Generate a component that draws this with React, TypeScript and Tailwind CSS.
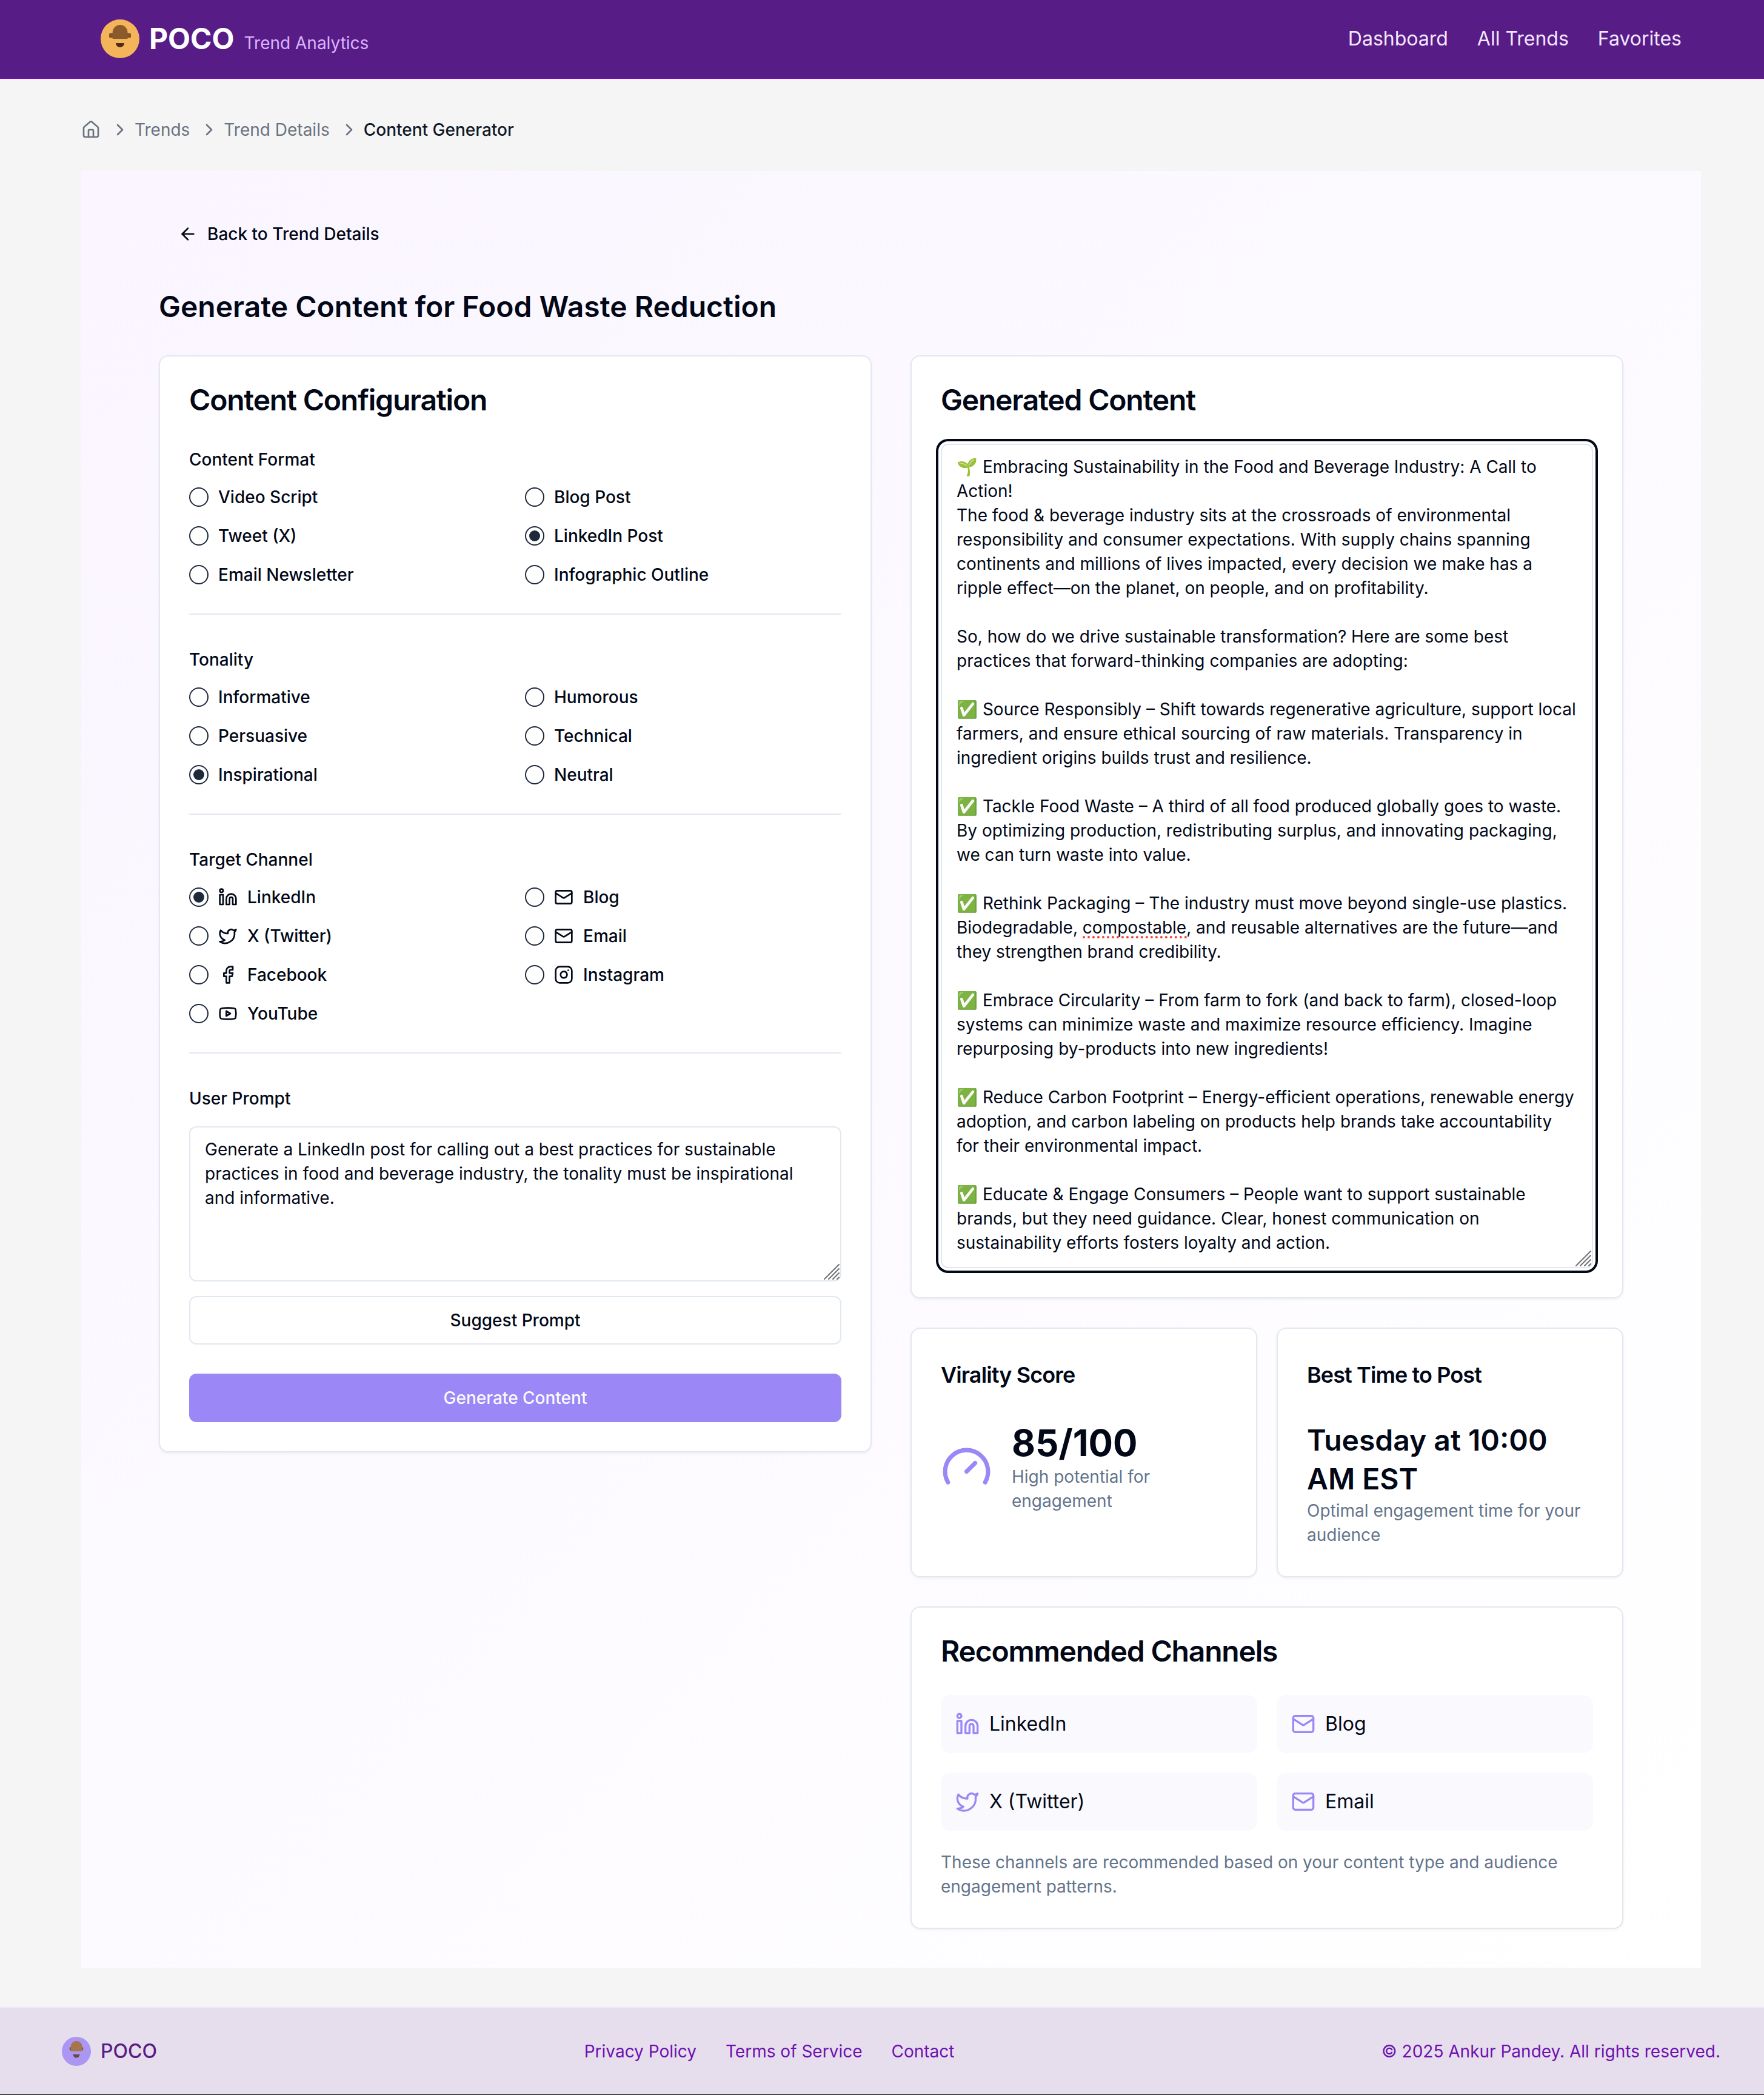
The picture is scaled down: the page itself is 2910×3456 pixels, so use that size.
import type { ComponentType, ReactNode } from "react";
import {
  ArrowLeft,
  ChevronRight,
  Facebook,
  House,
  Instagram,
  Linkedin,
  Mail,
  Twitter,
  Youtube,
} from "lucide-react";

type Icon = ComponentType<{ className?: string }>;

type Option = { label: string; icon?: Icon; checked?: boolean };

const formats: Option[] = [
  { label: "Video Script" },
  { label: "Blog Post" },
  { label: "Tweet (X)" },
  { label: "LinkedIn Post", checked: true },
  { label: "Email Newsletter" },
  { label: "Infographic Outline" },
];

const tones: Option[] = [
  { label: "Informative" },
  { label: "Humorous" },
  { label: "Persuasive" },
  { label: "Technical" },
  { label: "Inspirational", checked: true },
  { label: "Neutral" },
];

const channels: Option[] = [
  { label: "LinkedIn", icon: Linkedin, checked: true },
  { label: "Blog", icon: Mail },
  { label: "X (Twitter)", icon: Twitter },
  { label: "Email", icon: Mail },
  { label: "Facebook", icon: Facebook },
  { label: "Instagram", icon: Instagram },
  { label: "YouTube", icon: Youtube },
];

const recommended: { label: string; icon: Icon }[] = [
  { label: "LinkedIn", icon: Linkedin },
  { label: "Blog", icon: Mail },
  { label: "X (Twitter)", icon: Twitter },
  { label: "Email", icon: Mail },
];

const prompt =
  "Generate a LinkedIn post for calling out a best practices for sustainable practices in food and beverage industry, the tonality must be inspirational and informative.";

const post = `🌱 Embracing Sustainability in the Food and Beverage Industry: A Call to Action!
The food & beverage industry sits at the crossroads of environmental responsibility and consumer expectations. With supply chains spanning continents and millions of lives impacted, every decision we make has a ripple effect—on the planet, on people, and on profitability.

So, how do we drive sustainable transformation? Here are some best practices that forward-thinking companies are adopting:

✅ Source Responsibly – Shift towards regenerative agriculture, support local farmers, and ensure ethical sourcing of raw materials. Transparency in ingredient origins builds trust and resilience.

✅ Tackle Food Waste – A third of all food produced globally goes to waste. By optimizing production, redistributing surplus, and innovating packaging, we can turn waste into value.

✅ Rethink Packaging – The industry must move beyond single-use plastics. Biodegradable, compostable, and reusable alternatives are the future—and they strengthen brand credibility.

✅ Embrace Circularity – From farm to fork (and back to farm), closed-loop systems can minimize waste and maximize resource efficiency. Imagine repurposing by-products into new ingredients!

✅ Reduce Carbon Footprint – Energy-efficient operations, renewable energy adoption, and carbon labeling on products help brands take accountability for their environmental impact.

✅ Educate & Engage Consumers – People want to support sustainable brands, but they need guidance. Clear, honest communication on sustainability efforts fosters loyalty and action.`;

function HeaderLogo() {
  return (
    <svg viewBox="0 0 64 64" className="size-16" aria-hidden="true">
      <circle cx="32" cy="32" r="32" fill="#f4b459" />
      <rect x="14" y="22.8" width="36" height="7.6" rx="2" fill="#85532b" />
      <path d="M19.7 32V21.5a12.4 12.4 0 0 1 24.8 0V32z" fill="#8b5a2b" />
      <path d="M25 39h14a7 7 0 0 1-14 0z" fill="#4f2a1e" />
    </svg>
  );
}

function FooterLogo() {
  return (
    <svg viewBox="0 0 64 64" className="size-12" aria-hidden="true">
      <circle cx="32" cy="32" r="32" fill="#ab97f3" />
      <ellipse cx="20.5" cy="26.4" rx="3.6" ry="4" fill="#7a5648" />
      <ellipse cx="43.5" cy="26.4" rx="3.6" ry="4" fill="#7a5648" />
      <path d="M19.7 31.8V21.5a12.4 12.4 0 0 1 24.8 0v10.3z" fill="#a5754c" />
      <path d="M24.6 38.8h14.8a7.4 7.4 0 0 1-14.8 0z" fill="#6b4b45" />
    </svg>
  );
}

function GaugeIcon() {
  return (
    <svg
      viewBox="0 0 24 24"
      className="size-[85px] shrink-0 text-[#9b87f5]"
      fill="none"
      stroke="currentColor"
      strokeWidth="2"
      strokeLinecap="round"
      strokeLinejoin="round"
      aria-hidden="true"
    >
      <path d="m12 14 4-4" />
      <path d="M3.34 19a10 10 0 1 1 17.32 0" />
    </svg>
  );
}

function ResizeGrip() {
  return (
    <svg
      viewBox="0 0 26 26"
      className="pointer-events-none absolute right-[3px] bottom-[3px] size-[26px] text-[#6f7277]"
      fill="none"
      stroke="currentColor"
      strokeWidth="2"
      strokeLinecap="round"
      aria-hidden="true"
    >
      <path d="M1 25 25 1M8 25 25 8M15 25l10-10M22 25l3-3" />
    </svg>
  );
}

function Card({ children }: { children: ReactNode }) {
  return (
    <section className="rounded-2xl border-2 border-[#e2e8f0] bg-white p-12 shadow-[0_2px_4px_0_rgb(0_0_0/0.05)]">
      {children}
    </section>
  );
}

function CardTitle({ children }: { children: ReactNode }) {
  return <h2 className="mb-12 text-5xl leading-none font-semibold tracking-tight">{children}</h2>;
}

function RadioGroup({ title, name, options }: { title: string; name: string; options: Option[] }) {
  return (
    <fieldset className="mb-12 border-b-2 border-[#e2e8f0] pb-12">
      <legend className="mb-5 text-[28px] leading-13 font-medium">{title}</legend>
      <div className="grid grid-cols-2 gap-8">
        {options.map(({ label, icon: OptionIcon, checked }) => (
          <label key={label} className="flex h-8 items-center gap-4 text-[28px] leading-none font-medium">
            <input
              type="radio"
              name={name}
              defaultChecked={checked}
              className="grid size-8 shrink-0 appearance-none place-content-center rounded-full border-2 border-[#1e293b] before:size-[18px] before:rounded-full checked:before:bg-[#1e293b]"
            />
            {OptionIcon && <OptionIcon className="size-8 shrink-0" />}
            {label}
          </label>
        ))}
      </div>
    </fieldset>
  );
}

export default function App() {
  return (
    <div className="flex min-h-screen flex-col bg-[#f5f5f5] font-[Inter,'Noto_Sans',sans-serif] text-[#020817]">
      <header className="flex items-center justify-between border-b-2 border-purple-800 bg-[#581c87] py-8 pr-[136px] pl-[166px]">
        <a href="#home" className="flex items-center gap-4">
          <HeaderLogo />
          <span className="flex items-baseline gap-4">
            <span className="text-5xl leading-16 font-bold text-white">POCO</span>
            <span className="text-[28px] leading-10 text-[#d8b4fe]">Trend Analytics</span>
          </span>
        </a>
        <nav className="flex gap-12 text-[32px] leading-12 text-[#f3e8ff]">
          <a href="#dashboard">Dashboard</a>
          <a href="#trends">All Trends</a>
          <a href="#favorites">Favorites</a>
        </nav>
      </header>

      <main className="flex-1 py-16 pr-[104px] pl-[134px]">
        <nav aria-label="Breadcrumb" className="mb-12 text-[28px] leading-10 text-[#6b7280]">
          <ol className="flex items-center gap-4">
            <li>
              <a href="#home" aria-label="Home">
                <House className="size-8" />
              </a>
            </li>
            <li className="flex items-center gap-2">
              <ChevronRight className="size-8" />
              <a href="#trends">Trends</a>
            </li>
            <li className="flex items-center gap-2">
              <ChevronRight className="size-8" />
              <a href="#details">Trend Details</a>
            </li>
            <li className="flex items-center gap-2">
              <ChevronRight className="size-8" />
              <span className="font-medium text-[#111827]" aria-current="page">
                Content Generator
              </span>
            </li>
          </ol>
        </nav>

        <div className="bg-linear-to-br from-[#faf5ff] to-white px-32 py-16">
          <button type="button" className="mb-12 flex h-20 items-center gap-4 px-8 text-[28px] font-medium">
            <ArrowLeft className="size-8" />
            Back to Trend Details
          </button>
          <h1 className="mb-12 text-5xl leading-16 font-semibold">Generate Content for Food Waste Reduction</h1>

          <div className="grid grid-cols-2 items-start gap-16">
            <Card>
              <CardTitle>Content Configuration</CardTitle>
              <form>
                <RadioGroup title="Content Format" name="format" options={formats} />
                <RadioGroup title="Tonality" name="tonality" options={tones} />
                <RadioGroup title="Target Channel" name="channel" options={channels} />
                <label htmlFor="prompt" className="mb-5 block text-[28px] leading-13 font-medium">
                  User Prompt
                </label>
                <div className="relative mb-6">
                  <textarea
                    id="prompt"
                    defaultValue={prompt}
                    spellCheck={false}
                    className="block h-64 w-full resize-none rounded-xl border-2 border-[#e2e8f0] bg-white px-6 py-4 text-[28px] leading-10"
                  />
                  <ResizeGrip />
                </div>
                <button
                  type="button"
                  className="mb-12 block h-20 w-full rounded-xl border-2 border-[#e2e8f0] bg-white text-[28px] font-medium"
                >
                  Suggest Prompt
                </button>
                <button
                  type="button"
                  className="block h-20 w-full rounded-xl bg-[#9b87f5] text-[28px] font-medium text-[#f8fafc]"
                >
                  Generate Content
                </button>
              </form>
            </Card>

            <div className="flex flex-col gap-12">
              <Card>
                <CardTitle>Generated Content</CardTitle>
                <div className="relative">
                  <textarea
                    aria-label="Generated content"
                    defaultValue={post}
                    spellCheck={false}
                    className="block h-[1360px] w-full resize-none overflow-hidden rounded-xl border-2 border-[#e2e8f0] bg-white px-6 py-4 text-[28px] leading-10 ring-4 ring-[#020817] ring-offset-4 outline-none"
                  />
                  {/* Spelling mark under "compostable" */}
                  <span
                    aria-hidden="true"
                    className="pointer-events-none absolute top-[812px] left-[234px] w-[172px] border-b-4 border-dotted border-[#f04438]"
                  />
                  <ResizeGrip />
                </div>
              </Card>

              <div className="grid grid-cols-2 gap-8">
                <Card>
                  <h3 className="mb-12 text-4xl leading-14 font-semibold tracking-tight">Virality Score</h3>
                  <div className="flex items-center gap-8">
                    <GaugeIcon />
                    <div>
                      <p className="text-6xl leading-18 font-bold">85/100</p>
                      <p className="text-[28px] leading-10 text-[#64748b]">High potential for engagement</p>
                    </div>
                  </div>
                </Card>
                <Card>
                  <h3 className="mb-12 text-4xl leading-14 font-semibold tracking-tight">Best Time to Post</h3>
                  <p className="text-5xl leading-16 font-semibold">Tuesday at 10:00 AM EST</p>
                  <p className="text-[28px] leading-10 text-[#64748b]">Optimal engagement time for your audience</p>
                </Card>
              </div>

              <Card>
                <CardTitle>Recommended Channels</CardTitle>
                <ul className="mb-8 grid grid-cols-2 gap-8">
                  {recommended.map(({ label, icon: ChannelIcon }) => (
                    <li
                      key={label}
                      className="flex items-center gap-4 rounded-2xl bg-[#faf9fe] p-6 text-[32px] leading-12"
                    >
                      <ChannelIcon className="size-10 text-[#9b87f5]" />
                      {label}
                    </li>
                  ))}
                </ul>
                <p className="text-[28px] leading-10 text-[#64748b]">
                  These channels are recommended based on your content type and audience engagement patterns.
                </p>
              </Card>
            </div>
          </div>
        </div>
      </main>

      <footer className="border-b border-b-black bg-[#e6deed]">
        <div className="flex items-center justify-between border-t-2 border-[#f3e8ff] pt-12 pr-[72px] pb-[47px] pl-[102px] text-[28px] leading-10 text-purple-800">
          <div className="flex items-center gap-4">
            <FooterLogo />
            <span className="text-[32px] leading-12 font-medium text-[#581c87]">POCO</span>
          </div>
          <nav className="flex gap-12">
            <a href="#privacy">Privacy Policy</a>
            <a href="#terms">Terms of Service</a>
            <a href="#contact">Contact</a>
          </nav>
          <p>© 2025 Ankur Pandey. All rights reserved.</p>
        </div>
      </footer>
    </div>
  );
}
